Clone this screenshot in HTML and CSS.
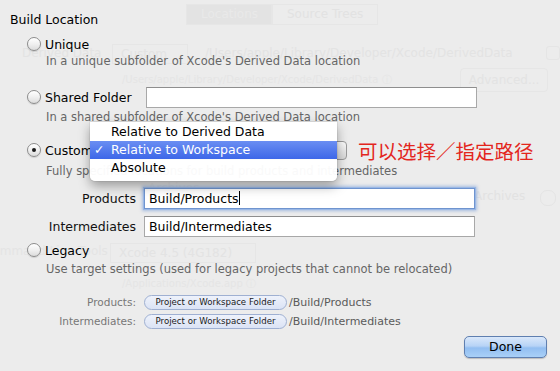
FILE: index.html
```html
<!DOCTYPE html>
<html>
<head>
<meta charset="utf-8">
<link rel="stylesheet" href="styles.css">
</head>
<body>
<div class="screen">
  <div class="ghost" aria-hidden="true">
    <div class="g-tabs"><span class="g-tab g-tab-on">Locations</span><span class="g-tab">Source Trees</span></div>
    <div class="g-dd-label">Derived Data</div>
    <div class="g-dd-pop">Custom</div>
    <div class="g-dd-path">/Users/apple/Library/Developer/Xcode/DerivedData</div>
    <div class="g-dd-box"></div>
    <div class="g-dd-sub">/Users/apple/Library/Developer/Xcode/DerivedData ⓘ</div>
    <div class="g-adv">Advanced...</div>
    <div class="g-arch">Archives</div>
    <div class="g-arch-pop">Archives</div>
    <div class="g-arch-box"></div>
    <div class="g-clt">Command Line Tools</div>
    <div class="g-clt-pop">Xcode 4.5 (4G182)</div>
    <div class="g-clt-sub">/Applications/Xcode.app ⓘ</div>
  </div>

  <div class="dialog">
    <div class="title">Build Location</div>

    <div class="opt opt-unique"><span class="radio"></span><span class="opt-label">Unique</span></div>
    <div class="desc desc-1">In a unique subfolder of Xcode's Derived Data location</div>

    <div class="opt opt-shared"><span class="radio"></span><span class="opt-label">Shared Folder</span><span class="field field-shared"></span></div>
    <div class="desc desc-2">In a shared subfolder of Xcode's Derived Data location</div>

    <div class="opt opt-custom"><span class="radio radio-on"></span><span class="opt-label">Custom</span><span class="popup-btn"></span></div>
    <div class="desc desc-3">Fully specified locations for build products and intermediates</div>

    <div class="path-row row-products"><span class="path-label">Products</span><span class="field field-path field-focus">Build/Products<span class="caret"></span></span></div>
    <div class="path-row row-inter"><span class="path-label">Intermediates</span><span class="field field-path">Build/Intermediates</span></div>

    <div class="opt opt-legacy"><span class="radio"></span><span class="opt-label">Legacy</span></div>
    <div class="desc desc-4">Use target settings (used for legacy projects that cannot be relocated)</div>

    <div class="sum-row sum-1"><span class="sum-label">Products:</span><span class="pill">Project or Workspace Folder</span><span class="sum-path">/Build/Products</span></div>
    <div class="sum-row sum-2"><span class="sum-label">Intermediates:</span><span class="pill">Project or Workspace Folder</span><span class="sum-path">/Build/Intermediates</span></div>

    <div class="actions"><span class="btn-done">Done</span></div>
  </div>

  <div class="menu">
    <div class="menu-item">Relative to Derived Data</div>
    <div class="menu-item menu-item-on"><span class="check">✓</span>Relative to Workspace</div>
    <div class="menu-item">Absolute</div>
  </div>

  <div class="note">可以选择／指定路径</div>
</div>
</body>
</html>
```

FILE: styles.css
```css
html, body {
  margin: 0;
  padding: 0;
}
body {
  background: #ececec;
  font-family: "DejaVu Sans", "Noto Sans", sans-serif;
  color: #000;
}
.screen {
  position: relative;
  width: 560px;
  height: 371px;
  overflow: hidden;
  background: #ececec;
}

/* faint window behind */
.ghost {
  position: absolute;
  inset: 0;
  color: #e3e3e3;
  font-size: 12px;
}
.ghost > div, .g-tabs {
  position: absolute;
  white-space: nowrap;
}
.g-tabs { left: 186px; top: 4px; display: flex; }
.g-tab {
  display: block;
  height: 19px;
  line-height: 19px;
  padding: 0 14px;
  border: 1px solid #e6e6e6;
  color: #e2e2e2;
}
.g-tab-on { background: #e3e3e3; color: #e9e9e9; width: 56px; }
.g-dd-label { left: 22px; top: 46px; }
.g-dd-pop { left: 112px; top: 44px; width: 66px; height: 18px; line-height: 18px; padding-left: 8px; border: 1px solid #e6e6e6; }
.g-dd-path { left: 205px; top: 46px; }
.g-dd-box { left: 546px; top: 46px; width: 12px; height: 12px; border: 1px solid #e5e5e5; border-radius: 3px; }
.g-dd-sub { left: 122px; top: 73px; font-size: 10px; color: #e5e5e5; }
.g-adv { left: 460px; top: 68px; width: 86px; height: 22px; line-height: 22px; text-align: center; border: 1px solid #e6e6e6; border-radius: 4px; }
.g-arch { left: 148px; top: 181px; color: #e6e6e6; }
.g-arch-pop { left: 474px; top: 189px; color: #e2e2e2; }
.g-arch-box { left: 540px; top: 190px; width: 14px; height: 14px; border: 1px solid #e4e4e4; border-radius: 7px; }
.g-clt { left: -16px; top: 244px; color: #e4e4e4; }
.g-clt-pop { left: 110px; top: 243px; width: 136px; height: 18px; line-height: 18px; padding-left: 8px; border: 1px solid #e6e6e6; }
.g-clt-sub { left: 122px; top: 277px; font-size: 10px; color: #e5e5e5; }

/* dialog */
.dialog {
  position: relative;
  display: flex;
  flex-direction: column;
  padding: 10px 13px 0 0;
  font-size: 12px;
}
.title {
  height: 20px;
  line-height: 20px;
  padding-left: 10px;
  font-size: 12.5px;
}
.opt {
  display: flex;
  align-items: center;
  padding-left: 27px;
}
.opt-unique { height: 16px; margin-top: 6px; }
.opt-shared { height: 22px; margin-top: 18px; }
.opt-custom { height: 22px; margin-top: 15px; }
.opt-legacy { height: 16px; margin-top: 4px; }
.opt-label {
  margin-left: 4px;
  font-size: 12.5px;
}
.radio {
  width: 12px;
  height: 12px;
  border: 1px solid #8c8c8c;
  border-radius: 50%;
  background: linear-gradient(#ffffff, #f0f0f0 50%, #dcdcdc);
  box-shadow: inset 0 1px 1px rgba(255,255,255,0.9), 0 1px 1px rgba(0,0,0,0.12);
  position: relative;
  flex: none;
}
.radio-on::after {
  content: "";
  position: absolute;
  left: 4px;
  top: 4px;
  width: 4px;
  height: 4px;
  border-radius: 50%;
  background: #1a1a1a;
}
.field {
  display: block;
  background: #fff;
  border: 1px solid #a8a8a8;
  border-top-color: #8e8e8e;
  box-sizing: border-box;
}
.field-shared {
  margin-left: 14px;
  width: 331px;
  height: 21px;
}
.popup-btn {
  display: block;
  margin-left: 8px;
  width: 246px;
  height: 19px;
  border: 1px solid #9a9a9a;
  border-radius: 4px;
  background: linear-gradient(#fdfdfd, #e6e6e6 55%, #d7d7d7);
  box-sizing: border-box;
}
.desc {
  height: 14px;
  line-height: 14px;
  padding-left: 46px;
  font-size: 11.5px;
  color: #666;
  white-space: nowrap;
}
.desc-1 { margin-top: 2px; }
.desc-2 { margin-top: 2px; }
.desc-3 { margin-top: 3px; }
.desc-4 { margin-top: 4px; }

.path-row {
  display: flex;
  align-items: center;
  height: 24px;
}
.row-products { margin-top: 8px; }
.row-inter { margin-top: 4px; }
.path-label {
  width: 136px;
  text-align: right;
  font-size: 12.5px;
  color: #111;
}
.field-path {
  margin-left: 8px;
  width: 331px;
  height: 21px;
  line-height: 19px;
  padding-left: 4px;
  font-size: 12.5px;
  position: relative;
}
.field-focus {
  border-color: #6f94cf;
  box-shadow: 0 0 0 1px #9ab8e6, 0 0 3px 2px rgba(110,150,215,0.55);
}
.caret {
  display: inline-block;
  width: 1px;
  height: 14px;
  background: #000;
  vertical-align: -2px;
}

.sum-row {
  display: flex;
  align-items: center;
  height: 16px;
}
.sum-1 { margin-top: 18px; }
.sum-2 { margin-top: 3px; }
.sum-label {
  width: 136px;
  text-align: right;
  font-size: 10.5px;
  color: #777;
}
.pill {
  margin-left: 8px;
  width: 143px;
  height: 15px;
  line-height: 13px;
  box-sizing: border-box;
  border: 1px solid #9fb0d2;
  border-radius: 8px;
  background: linear-gradient(#eef2fb, #dbe3f5);
  font-size: 8.6px;
  color: #1a1a1a;
  text-align: center;
  white-space: nowrap;
}
.sum-path {
  margin-left: 2px;
  font-size: 11px;
  color: #5a5a5a;
}

.actions {
  display: flex;
  justify-content: flex-end;
  margin-top: 7px;
}
.btn-done {
  display: block;
  width: 83px;
  height: 22px;
  line-height: 20px;
  box-sizing: border-box;
  text-align: center;
  font-size: 12.5px;
  color: #000;
  border: 1px solid #5f7fb0;
  border-radius: 5px;
  background: linear-gradient(#dae8fa, #b7d3f6 45%, #92bef1 55%, #a9d0f7);
  box-shadow: 0 1px 1px rgba(0,0,0,0.2);
}

/* popup menu overlay */
.menu {
  position: absolute;
  left: 90px;
  top: 122px;
  width: 247px;
  padding: 1px 0 4px;
  background: rgba(255,255,255,0.96);
  border-radius: 0 0 5px 5px;
  box-shadow: 0 5px 12px rgba(0,0,0,0.35), 0 0 0 1px rgba(0,0,0,0.06);
  font-size: 12.5px;
}
.menu-item {
  position: relative;
  height: 18px;
  line-height: 18px;
  padding-left: 21px;
  white-space: nowrap;
}
.menu-item-on {
  color: #fff;
  background: linear-gradient(#6a8ef2, #3d67e8);
}
.check {
  position: absolute;
  left: 4px;
  top: 0;
}

/* red annotation */
.note {
  position: absolute;
  left: 358px;
  top: 139px;
  font-family: "Noto Sans CJK SC", sans-serif;
  font-size: 19.5px;
  line-height: 24px;
  color: #e3261d;
  white-space: nowrap;
}
```
